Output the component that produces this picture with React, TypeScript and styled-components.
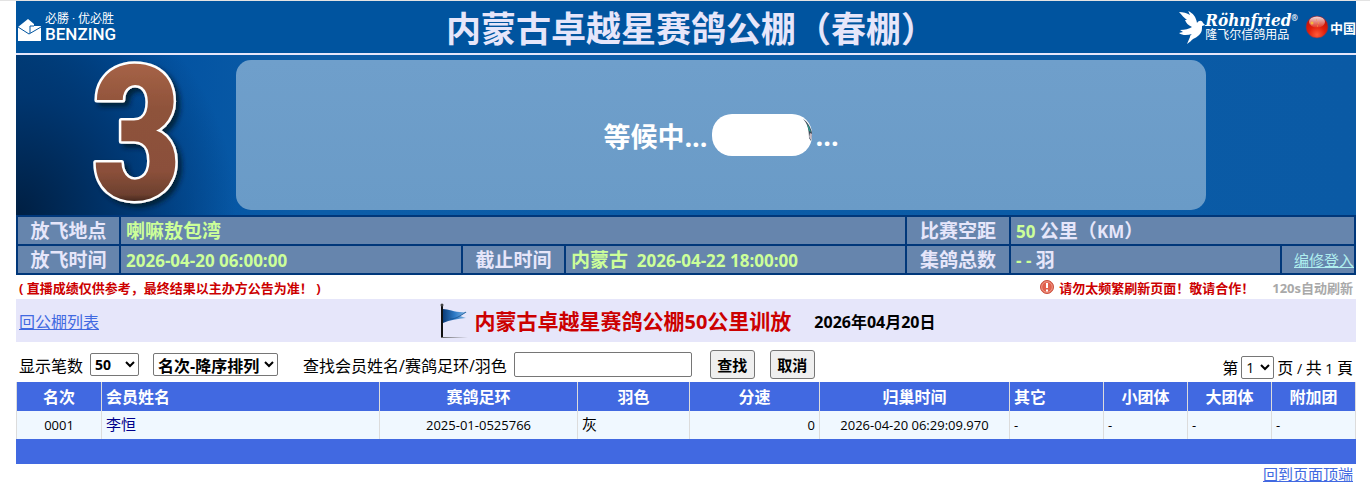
import React from "react";
import styled, { createGlobalStyle } from "styled-components";

const sans = `"Open Sans", "Noto Sans CJK SC", sans-serif`;

const GlobalStyle = createGlobalStyle`
  * { box-sizing: border-box; }
  body { margin: 0; background: #fff; color: #000; font-family: ${sans}; font-size: 16px; }
  a { color: #4169e1; }
`;

const Page = styled.div`
  border-top: 1px solid #e3e3e3;
  padding: 0 14px 0 16px;
`;

const Header = styled.header`
  display: grid;
  grid-template-columns: 1fr auto 1fr;
  align-items: center;
  height: 54px;
  background: #00549f;
  color: #fff;
  border-bottom: 2px solid #e6e6fa;
`;

const Title = styled.h1`
  margin: 0;
  padding: 4px 0 0 10px;
  font-size: 35px;
  line-height: 48px;
  font-weight: 700;
  color: #e6e6fa;
`;

const Brand = styled.div`
  display: flex;
  align-items: flex-end;
  gap: 3px;
  padding-left: 1px;
`;

const BrandText = styled.div`
  display: flex;
  flex-direction: column;
  font-family: Roboto, "Noto Sans CJK SC", sans-serif;
`;

const BrandSlogan = styled.span`
  font-size: 12px;
  line-height: 14px;
`;

const BrandName = styled.span`
  font-size: 17px;
  line-height: 16px;
  font-weight: 500;
`;

const HeaderRight = styled.div`
  display: flex;
  justify-content: flex-end;
  align-items: center;
`;

const SponsorText = styled.div`
  display: flex;
  flex-direction: column;
`;

const SponsorName = styled.span`
  font: italic 700 17px/15px "DejaVu Serif Condensed", "DejaVu Serif", serif;
`;

const Registered = styled.sup`
  font: 700 8px/8px ${sans};
  vertical-align: 5px;
`;

const SponsorSub = styled.span`
  font-size: 12px;
  line-height: 14px;
`;

const Country = styled.span`
  display: flex;
  align-items: center;
  gap: 1px;
  margin-left: 7px;
  font-size: 13px;
  font-weight: 700;
`;

const Hero = styled.section`
  display: flex;
  height: 160px;
  padding: 5px 150px 5px 0;
  background:
    radial-gradient(ellipse 220px 240px at 0 100%, #001f42 0%, #003670 50%, rgba(0, 80, 160, 0) 100%),
    linear-gradient(90deg, #00437f 0, #0050a0 110px, #0c5da8 300px, #0a5aa5 100%);
`;

const Medal = styled.div`
  width: 220px;
  flex: none;
  svg { display: block; overflow: visible; }
`;

const Waiting = styled.div`
  flex: 1;
  display: flex;
  justify-content: center;
  align-items: center;
  gap: 4px;
  border-radius: 15px;
  background: linear-gradient(#6f9fcb, #6a9bc7);
  color: #fff;
  font-size: 27px;
  font-weight: 700;
`;

const InfoTable = styled.table`
  width: 100%;
  table-layout: fixed;
  border-collapse: collapse;
  font-size: 19px;
  line-height: 24px;
  font-weight: 700;
`;

const InfoLabel = styled.th`
  height: 29px;
  padding: 1px 0 0;
  border: 2px solid #00377a;
  background: #6685ad;
  color: #e6e6fa;
`;

const InfoValue = styled.td<{ $plain?: boolean }>`
  height: 29px;
  padding: 1px 5px 0;
  border: 2px solid #00377a;
  background: #6685ad;
  color: ${(p) => (p.$plain ? "#e6e6fa" : "#ccff99")};
`;

const Num = styled.span<{ $size: number; $green?: boolean }>`
  font-size: ${(p) => p.$size}px;
  line-height: 1;
  ${(p) => p.$green && "color: #ccff99;"}
`;

const EditCell = styled(InfoValue)`
  padding: 0;
  text-align: right;
  a { font-size: 15px; font-weight: 400; color: #afeeee; }
`;

const Notes = styled.div`
  display: flex;
  align-items: center;
  height: 24px;
  padding: 0 3px;
  font-size: 13px;
  font-weight: 700;
  color: #c00;
`;

const Warning = styled.span`
  display: flex;
  align-items: center;
  gap: 5px;
  margin-left: auto;
`;

const Refresh = styled.span`
  margin-left: 18px;
  color: #a9a9a9;
`;

const RaceBar = styled.div`
  display: grid;
  grid-template-columns: 1fr auto 1fr;
  align-items: center;
  height: 43px;
  padding: 0 3px;
  background: #e6e6fa;
`;

const Race = styled.div`
  display: flex;
  align-items: center;
  padding-left: 4px;
`;

const RaceName = styled.h2`
  margin: 0 23px 0 6px;
  font-size: 21px;
  line-height: 32px;
  color: #c00;
`;

const RaceDate = styled.time`
  font-size: 16px;
  font-weight: 700;
`;

const Toolbar = styled.form`
  display: flex;
  align-items: center;
  height: 40px;
  padding: 5px 3px 0;
`;

const Select = styled.select<{ $width: number; $size: number; $bold?: boolean }>`
  width: ${(p) => p.$width}px;
  height: 23px;
  padding: 0;
  border: 1px solid #767676;
  border-radius: 2px;
  background: #fff;
  color: #000;
  font: ${(p) => (p.$bold ? 700 : 400)} ${(p) => p.$size}px ${sans};
`;

const SearchField = styled.div`
  display: flex;
  align-items: center;
  gap: 7px;
  margin: 0 3px 0 25px;
`;

const Search = styled.input`
  width: 178px;
  height: 25px;
  border: 1px solid #767676;
  border-radius: 2px;
  font: 16px ${sans};
`;

const Button = styled.button`
  width: 45px;
  height: 29px;
  margin-left: 15px;
  padding: 0;
  border: 1px solid #767676;
  border-radius: 3px;
  background: #efefef;
  color: #000;
  font: 700 15px ${sans};
`;

const Field = styled.label`
  display: flex;
  align-items: center;
  gap: 7px;
  margin-right: 14px;
`;

const Pager = styled.div`
  display: flex;
  align-items: center;
  gap: 3px;
  margin-left: auto;
  padding-top: 5px;
`;

const Results = styled.table`
  width: 100%;
  table-layout: fixed;
  border-collapse: separate;
  border-spacing: 0;
  border-left: 1px solid #dcdcdc;
`;

type Align = "left" | "center" | "right";

const Th = styled.th<{ $align: Align }>`
  height: 29px;
  padding: 1px 4px 0;
  border-right: 1px solid #dcdcdc;
  background: #4169e1;
  color: #fff;
  font-size: 16px;
  line-height: 28px;
  text-align: ${(p) => p.$align};
`;

const Td = styled.td<{ $align: Align }>`
  height: 28px;
  padding: 0 4px;
  border-right: 1px solid #dcdcdc;
  background: #f0f8ff;
  font-size: 13px;
  line-height: 24px;
  text-align: ${(p) => p.$align};
`;

const Name = styled.span`
  font-size: 15px;
  line-height: 1;
  color: #00008b;
`;

const Bar = styled.div`
  height: 25px;
  background: #4169e1;
`;

const Footer = styled.footer`
  padding: 0 3px;
  text-align: right;
  font-size: 15px;
  line-height: 20px;
`;

const Envelope = () => (
  <svg width="25" height="23" viewBox="0 0 25 23" aria-hidden="true">
    <path fill="#fff" d="M1 8 11 0 17 5V7H24V22H1Z" />
    <path fill="none" stroke="#00549f" d="M1 8 12 15 24 8M13 7V14M13 7H17" />
  </svg>
);

const Bird = () => (
  <svg width="26" height="33" viewBox="0 0 26 33" aria-hidden="true">
    <path
      fill="#fff"
      d="M0 1C4 1 8 2 11 4C10 2 10 1 9 0C14 2 17 6 18 12C20 9 23 9 24 12L26 14L23 15C23 18 23 21 21 23C18 27 14 27 12 30L8 33L11 26C11 24 12 24 13 23C9 24 4 25 0 22L4 21L1 19C6 19 10 18 13 16C9 14 7 12 6 9L8 9C5 7 3 4 0 1Z"
    />
  </svg>
);

const FlagBall = () => (
  <svg width="24" height="26" viewBox="0 0 24 26" aria-hidden="true">
    <defs>
      <radialGradient id="ball" cx="50%" cy="85%" r="85%">
        <stop offset="0" stopColor="#ff5a38" />
        <stop offset=".45" stopColor="#e2200c" />
        <stop offset="1" stopColor="#b80c04" />
      </radialGradient>
      <linearGradient id="shine" x1="0" y1="0" x2="0" y2="1">
        <stop offset="0" stopColor="#fff" stopOpacity=".85" />
        <stop offset="1" stopColor="#fff" stopOpacity=".1" />
      </linearGradient>
    </defs>
    <circle cx="12" cy="13" r="11" fill="url(#ball)" stroke="#56406e" strokeWidth=".6" />
    <ellipse cx="12" cy="8" rx="8" ry="5.500" fill="url(#shine)" />
    <circle cx="7" cy="9" r="1.500" fill="#f6b73c" />
    <path stroke="#f6a03c" d="M11 6h1M13 9h1M12 12h1" />
  </svg>
);

const Flag = () => (
  <svg width="28" height="36" viewBox="0 0 28 36" aria-hidden="true">
    <defs>
      <linearGradient id="flag" x1="0" y1="0" x2="1" y2="0">
        <stop offset="0" stopColor="#0b3c78" />
        <stop offset=".5" stopColor="#2f7cc8" />
        <stop offset="1" stopColor="#8dbbe4" />
      </linearGradient>
      <linearGradient id="ground" x1="0" y1="0" x2="1" y2="0">
        <stop offset="0" stopColor="#666" />
        <stop offset="1" stopColor="#666" stopOpacity="0" />
      </linearGradient>
    </defs>
    <path fill="url(#ground)" d="M1 34H28V35H1Z" />
    <path fill="url(#flag)" d="M3 6C9 6 15 10 27 9L20 13L26 15C17 16 10 17 3 20Z" />
    <path fill="none" stroke="#17528f" strokeWidth=".8" d="M10 16C16 16 20 13 26 9" />
    <path stroke="#111" strokeWidth="2" d="M2 2V34" />
    <circle cx="2" cy="2" r="1.500" fill="#444" />
  </svg>
);

const Alert = () => (
  <svg width="14" height="14" viewBox="0 0 14 14" aria-hidden="true">
    <circle cx="7" cy="7" r="6.500" fill="#e0604c" stroke="#c8503e" />
    <circle cx="7" cy="7" r="5.300" fill="none" stroke="#f3a898" strokeWidth=".8" />
    <path stroke="#fff" strokeWidth="2" d="M7 3V8M7 9.500V11.500" />
  </svg>
);

const Three = () => (
  <svg width="220" height="150" viewBox="0 0 220 150" role="img" aria-label="3">
    <defs>
      <linearGradient id="bronze" gradientUnits="userSpaceOnUse" x1="0" y1="0" x2="0" y2="143">
        <stop offset="0" stopColor="#a86448" />
        <stop offset=".35" stopColor="#8e523a" />
        <stop offset=".78" stopColor="#8b503a" />
        <stop offset=".94" stopColor="#6d402f" />
        <stop offset="1" stopColor="#3c211a" />
      </linearGradient>
      <filter id="shade" x="-20%" y="-20%" width="150%" height="150%">
        <feDropShadow dx="4" dy="4" stdDeviation="2.500" floodColor="#001428" floodOpacity=".8" />
      </filter>
    </defs>
    <text
      x="121" y="139" textAnchor="middle" fontFamily='"Roboto Condensed", "Open Sans Condensed", Roboto, sans-serif'
      fontWeight="700" fontSize="188" fill="url(#bronze)" stroke="#fff" strokeWidth="5"
      strokeLinejoin="round" paintOrder="stroke" filter="url(#shade)"
    >3</text>
  </svg>
);

const Pill = () => (
  <svg width="100" height="42" viewBox="0 0 100 42" aria-hidden="true">
    <rect width="100" height="42" rx="20" fill="#fff" />
    <path fill="#3c4a58" d="M91 5C96 8 99 14 100 19L99 27L97 24C97 17 96 10 91 5Z" />
    <path fill="#2a9d8f" d="M95 10C98 13 98 16 99 18L97 17Z" />
    <path fill="#c9bcc6" d="M98 19 100 20 99 26 97 23Z" />
  </svg>
);

const columns: { label: string; width: number; head: Align; body: Align; value: React.ReactNode }[] = [
  { label: "名次", width: 85, head: "center", body: "center", value: "0001" },
  { label: "会员姓名", width: 278, head: "left", body: "left", value: <Name>李恒</Name> },
  { label: "赛鸽足环", width: 198, head: "center", body: "center", value: "2025-01-0525766" },
  { label: "羽色", width: 112, head: "center", body: "left", value: <Num $size={15}>灰</Num> },
  { label: "分速", width: 130, head: "center", body: "right", value: "0" },
  { label: "归巢时间", width: 190, head: "center", body: "center", value: "2026-04-20 06:29:09.970" },
  { label: "其它", width: 94, head: "left", body: "left", value: "-" },
  { label: "小团体", width: 84, head: "center", body: "left", value: "-" },
  { label: "大团体", width: 84, head: "center", body: "left", value: "-" },
  { label: "附加团", width: 84, head: "center", body: "left", value: "-" },
];

const infoWidths = [103, 342, 103, 341, 104, 271, 74];

const share = (width: number, total: number) => ({ width: `${(width / total) * 100}%` });

export default function App() {
  return (
    <Page>
      <GlobalStyle />
      <Header>
        <Brand>
          <Envelope />
          <BrandText>
            <BrandSlogan>必勝 · 优必胜</BrandSlogan>
            <BrandName>BENZING</BrandName>
          </BrandText>
        </Brand>
        <Title>内蒙古卓越星赛鸽公棚（春棚）</Title>
        <HeaderRight>
          <Bird />
          <SponsorText>
            <SponsorName>Röhnfried<Registered>®</Registered></SponsorName>
            <SponsorSub>隆飞尔信鸽用品</SponsorSub>
          </SponsorText>
          <Country><FlagBall />中国</Country>
        </HeaderRight>
      </Header>

      <Hero>
        <Medal><Three /></Medal>
        <Waiting><span>等候中...</span><Pill /><span>...</span></Waiting>
      </Hero>

      <InfoTable>
        <colgroup>
          {infoWidths.map((w, i) => <col key={i} style={share(w, 1338)} />)}
        </colgroup>
        <tbody>
          <tr>
            <InfoLabel scope="row">放飞地点</InfoLabel>
            <InfoValue colSpan={3}>喇嘛敖包湾</InfoValue>
            <InfoLabel scope="row">比赛空距</InfoLabel>
            <InfoValue colSpan={2} $plain><Num $size={17} $green>50 </Num>公里（<Num $size={17}>KM</Num>）</InfoValue>
          </tr>
          <tr>
            <InfoLabel scope="row">放飞时间</InfoLabel>
            <InfoValue><Num $size={17}>2026-04-20 06:00:00</Num></InfoValue>
            <InfoLabel scope="row">截止时间</InfoLabel>
            <InfoValue>内蒙古<Num $size={17}>&nbsp; 2026-04-22 18:00:00</Num></InfoValue>
            <InfoLabel scope="row">集鸽总数</InfoLabel>
            <InfoValue $plain><Num $size={17} $green>- - </Num>羽</InfoValue>
            <EditCell><a href="#login">编修登入</a></EditCell>
          </tr>
        </tbody>
      </InfoTable>

      <Notes>
        <span>( 直播成绩仅供参考，最终结果以主办方公告为准！ )</span>
        <Warning><Alert />请勿太频繁刷新页面！敬请合作！</Warning>
        <Refresh>120s自动刷新</Refresh>
      </Notes>

      <RaceBar>
        <div><a href="#list">回公棚列表</a></div>
        <Race>
          <Flag />
          <RaceName>内蒙古卓越星赛鸽公棚<Num $size={20}>50</Num>公里训放</RaceName>
          <RaceDate>2026年04月20日</RaceDate>
        </Race>
      </RaceBar>

      <Toolbar onSubmit={(e) => e.preventDefault()}>
        <Field>
          显示笔数
          <Select $width={49} $size={14} $bold defaultValue="50">
            <option>50</option>
          </Select>
        </Field>
        <Select $width={125} $size={16} $bold aria-label="排序" defaultValue="desc">
          <option value="desc">名次-降序排列</option>
        </Select>
        <SearchField>
          <label htmlFor="keyword">查找会员姓名/赛鸽足环/羽色</label>
          <Search id="keyword" type="text" />
        </SearchField>
        <Button type="submit">查找</Button>
        <Button type="reset">取消</Button>
        <Pager>
          <label htmlFor="page">第</label>
          <Select id="page" $width={33} $size={14} defaultValue="1">
            <option>1</option>
          </Select>
          <span>页<Num $size={14}> / </Num>共<Num $size={14}> 1 </Num>頁</span>
        </Pager>
      </Toolbar>

      <Results>
        <colgroup>
          {columns.map((c) => <col key={c.label} style={share(c.width, 1339)} />)}
        </colgroup>
        <thead>
          <tr>{columns.map((c) => <Th key={c.label} scope="col" $align={c.head}>{c.label}</Th>)}</tr>
        </thead>
        <tbody>
          <tr>{columns.map((c) => <Td key={c.label} $align={c.body}>{c.value}</Td>)}</tr>
        </tbody>
      </Results>
      <Bar />
      <Footer><a href="#top">回到页面顶端</a></Footer>
    </Page>
  );
}
